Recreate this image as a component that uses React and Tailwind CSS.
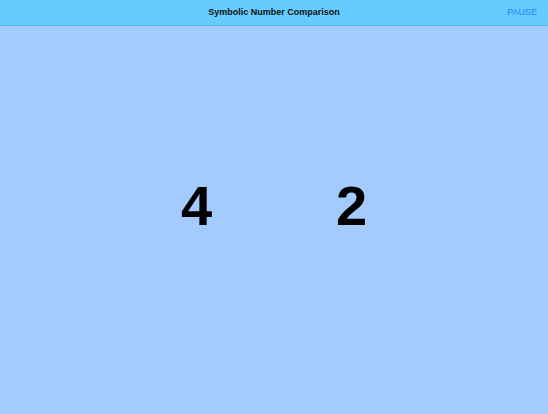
export default function App() {
  return (
    <div className="w-[548px] h-[414px] flex flex-col bg-[#a3cbfe] overflow-hidden" style={{ fontFamily: '"Liberation Sans", Arial, sans-serif' }}>
      <div className="h-[26px] shrink-0 bg-[#66cbff] border-b border-[#5cb4ea] flex items-center relative">
        <div className="flex-1 text-center text-[9px] font-bold text-[#111]">Symbolic Number Comparison</div>
        <div className="absolute right-[11px] top-0 h-full flex items-center text-[9px] text-[#1e86f5]">PAUSE</div>
      </div>
      <div className="flex-1 flex justify-center pt-[152px]">
        <div className="grid grid-cols-2 w-[310px]">
          <div className="text-center text-[56px] leading-none font-bold text-black">4</div>
          <div className="text-center text-[56px] leading-none font-bold text-black">2</div>
        </div>
      </div>
    </div>
  );
}
